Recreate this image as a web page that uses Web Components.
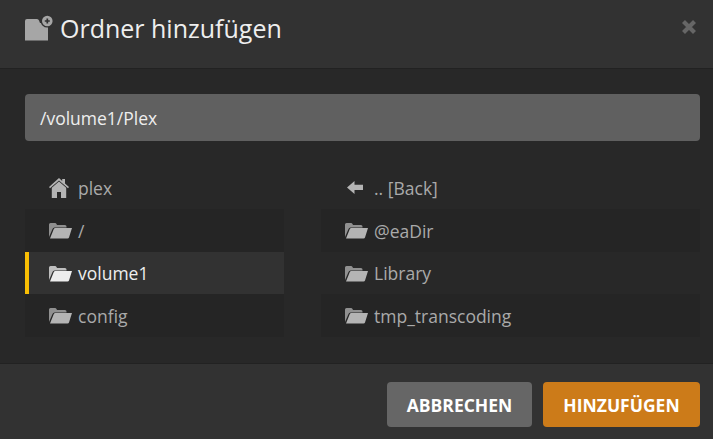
<!DOCTYPE html>
<html>
<head>
<meta charset="utf-8">
<style>
    html, body { margin: 0; padding: 0; background: #282828; }
    body { width: 713px; height: 439px; overflow: hidden; font-family: "Open Sans", sans-serif; }
</style>
</head>
<body>
<add-folder-dialog>
    <span slot="title">Ordner hinzufügen</span>
    <path-field slot="path" value="/volume1/Plex"></path-field>
    <dir-list slot="left">
        <dir-row icon="home" plain>plex</dir-row>
        <dir-row>/</dir-row>
        <dir-row active>volume1</dir-row>
        <dir-row>config</dir-row>
    </dir-list>
    <dir-list slot="right">
        <dir-row icon="back" plain>.. [Back]</dir-row>
        <dir-row>@eaDir</dir-row>
        <dir-row plain>Library</dir-row>
        <dir-row>tmp_transcoding</dir-row>
    </dir-list>
    <modal-button slot="actions" width="145">ABBRECHEN</modal-button>
    <modal-button slot="actions" width="157" primary>HINZUFÜGEN</modal-button>
</add-folder-dialog>

<script>
const ICONS = {
    folder: '<svg width="23" height="17" viewBox="0 0 23 17"><path d="M0 15V2.500Q0 1 1.500 1H6q1 0 1.500 1l.5 1h8q1.500 0 1.500 1.500V5.500H5.500Q4 5.500 3.500 7L0 15z" fill="currentColor" opacity=".75"/><path d="M1 16.500l3.800-9.500q.4-1 1.500-1H23l-3 9.500q-.3 1-1.500 1H1z" fill="currentColor"/></svg>',
    home: '<svg width="20" height="20" viewBox="0 0 20 20"><path d="M10 0l3.200 2.900V1H16v4.400L20 9l-1 1.300-9-7.700-9 7.700L0 9zM10 3.500l7.200 6.300V20H12v-6H8v6H2.800V9.800z" fill="currentColor"/></svg>',
    back: '<svg width="16" height="13" viewBox="0 0 16 13"><path d="M7.500 0v3.700H16v5.300H7.500v4L0 6.500z" fill="currentColor"/></svg>'
};

class AddFolderDialog extends HTMLElement {
    connectedCallback() {
        this.attachShadow({ mode: 'open' });
        this.shadowRoot.innerHTML = `
            <style>
                :host { display: flex; flex-direction: column; width: 713px; height: 439px; background: #282828; }
                header {
                    box-sizing: border-box;
                    background: #323232;
                    border-bottom: 1px solid #222;
                    height: 69px;
                    padding: 0 16px 13px 25px;
                    display: flex;
                    align-items: center;
                    color: #eee;
                    font-size: 25px;
                }
                header .icon { color: #a6a6a6; display: flex; margin: 1px 7px 0 0; }
                header .close { margin-left: auto; color: #666; display: flex; margin-top: -2px; }
                main { flex: 1; padding: 25px 13px 0 25px; box-sizing: border-box; }
                .columns { display: grid; grid-template-columns: 259px 379px; column-gap: 37px; margin-top: 26px; }
                footer {
                    height: 76px;
                    box-sizing: border-box;
                    background: #323232;
                    border-top: 1px solid #222;
                    padding: 18px 13px 0 0;
                    display: flex;
                    justify-content: flex-end;
                    gap: 11px;
                }
            </style>
            <header>
                <span class="icon">
                    <svg width="28" height="26" viewBox="0 0 28 26"><path d="M0 6Q0 4 2 4H12q1.500 0 2 1.500L15 8H23V25.500H0z" fill="currentColor"/><circle cx="22.300" cy="6" r="6.600" fill="#323232"/><circle cx="22.300" cy="6" r="5.300" fill="currentColor"/><path d="M19.800 6h5M22.300 3.500v5" stroke="#323232" stroke-width="1.700"/></svg>
                </span>
                <slot name="title"></slot>
                <span class="close">
                    <svg width="16" height="16" viewBox="0 0 16 16"><path d="M2.500 2.500l11 11M13.500 2.500l-11 11" stroke="currentColor" stroke-width="4.200"/></svg>
                </span>
            </header>
            <main>
                <slot name="path"></slot>
                <div class="columns">
                    <slot name="left"></slot>
                    <slot name="right"></slot>
                </div>
            </main>
            <footer><slot name="actions"></slot></footer>
        `;
    }
}

class PathField extends HTMLElement {
    connectedCallback() {
        this.attachShadow({ mode: 'open' });
        this.shadowRoot.innerHTML = `
            <style>
                :host {
                    display: flex;
                    align-items: center;
                    height: 47px;
                    box-sizing: border-box;
                    padding: 0 15px;
                    border-radius: 4px;
                    background: #606060;
                    color: #eee;
                    font-size: 17.500px;
                }
            </style>
            <span>${this.getAttribute('value')}</span>
        `;
    }
}

class DirList extends HTMLElement {
    connectedCallback() {
        this.attachShadow({ mode: 'open' });
        this.shadowRoot.innerHTML = `
            <style>
                :host { display: grid; grid-template-rows: 42px 43px 42px 43px; }
            </style>
            <slot></slot>
        `;
    }
}

class DirRow extends HTMLElement {
    connectedCallback() {
        const icon = this.getAttribute('icon') || 'folder';
        this.attachShadow({ mode: 'open' });
        this.shadowRoot.innerHTML = `
            <style>
                :host {
                    display: flex;
                    align-items: center;
                    box-sizing: border-box;
                    padding-left: 24px;
                    background: #252525;
                    color: #aaa;
                    font-size: 17.500px;
                }
                :host([plain]) { background: transparent; }
                :host([active]) { background: #323232; color: #eee; border-left: 4px solid #f9be03; padding-left: 20px; }
                .icon { width: 29px; display: flex; align-items: center; color: #b4b4b4; }
                :host([active]) .icon { color: #eee; }
                :host([icon="back"]) .icon { width: 27px; margin-left: 2px; margin-top: -2px; }
            </style>
            <span class="icon">${ICONS[icon]}</span>
            <slot></slot>
        `;
    }
}

class ModalButton extends HTMLElement {
    connectedCallback() {
        this.attachShadow({ mode: 'open' });
        this.shadowRoot.innerHTML = `
            <style>
                :host {
                    display: flex;
                    align-items: center;
                    justify-content: center;
                    width: ${this.getAttribute('width')}px;
                    height: 45px;
                    border-radius: 4px;
                    background: #666;
                    color: #fff;
                    font-size: 17.500px;
                    font-weight: 700;
                }
                :host([primary]) { background: #cc7b19; }
            </style>
            <slot></slot>
        `;
    }
}

customElements.define('add-folder-dialog', AddFolderDialog);
customElements.define('path-field', PathField);
customElements.define('dir-list', DirList);
customElements.define('dir-row', DirRow);
customElements.define('modal-button', ModalButton);
</script>
</body>
</html>
